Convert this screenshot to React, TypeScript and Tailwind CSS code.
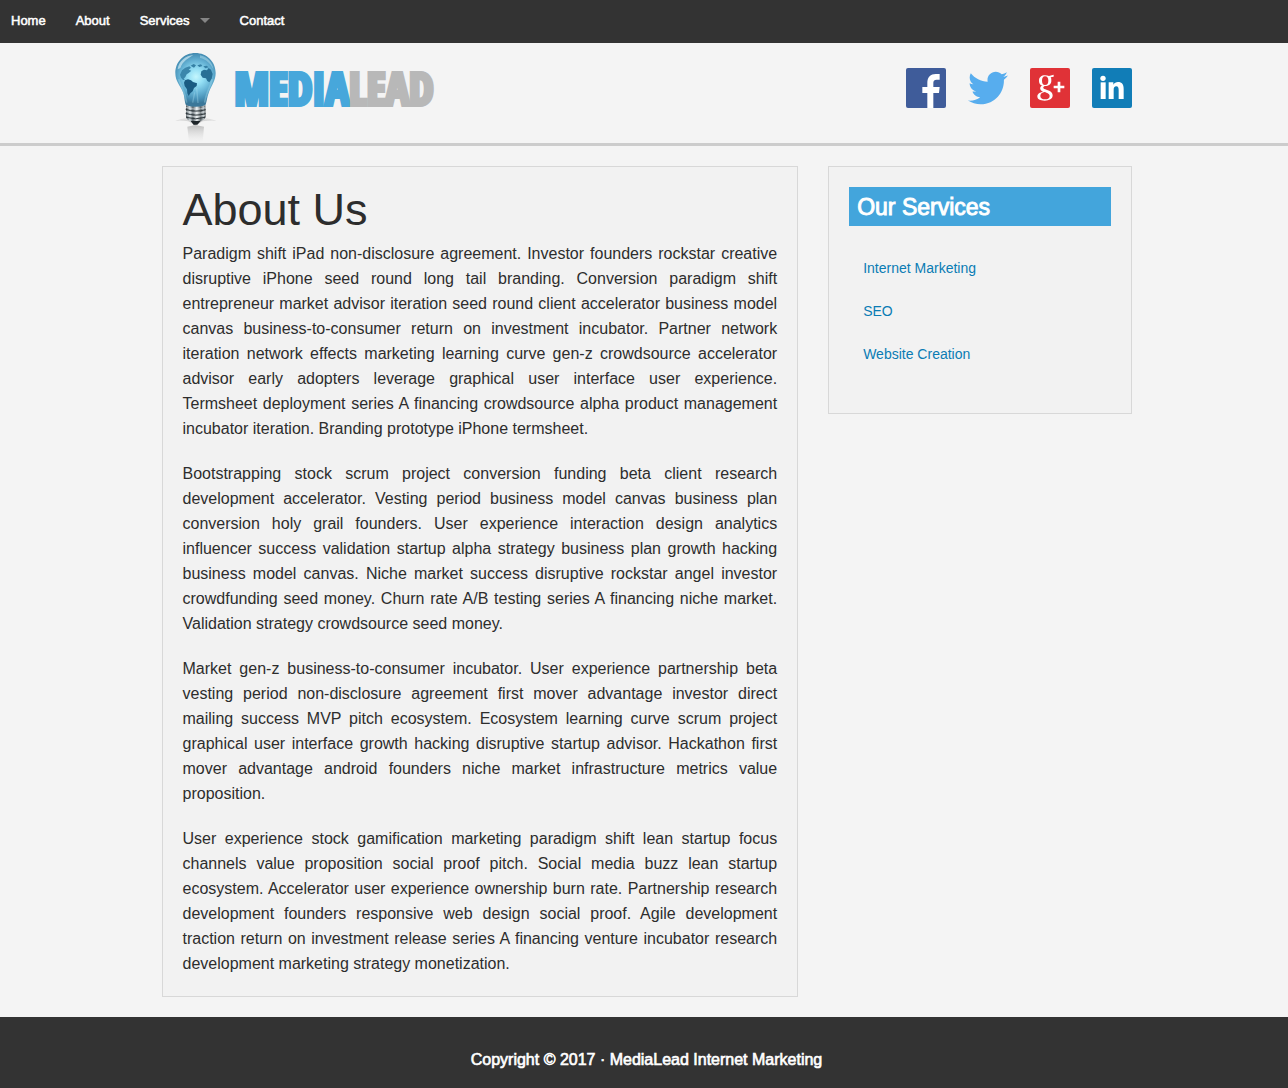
import React from "react";
import { FaTwitter } from "react-icons/fa";

const paragraphs = [
  "Paradigm shift iPad non-disclosure agreement. Investor founders rockstar creative disruptive iPhone seed round long tail branding. Conversion paradigm shift entrepreneur market advisor iteration seed round client accelerator business model canvas business-to-consumer return on investment incubator. Partner network iteration network effects marketing learning curve gen-z crowdsource accelerator advisor early adopters leverage graphical user interface user experience. Termsheet deployment series A financing crowdsource alpha product management incubator iteration. Branding prototype iPhone termsheet.",
  "Bootstrapping stock scrum project conversion funding beta client research development accelerator. Vesting period business model canvas business plan conversion holy grail founders. User experience interaction design analytics influencer success validation startup alpha strategy business plan growth hacking business model canvas. Niche market success disruptive rockstar angel investor crowdfunding seed money. Churn rate A/B testing series A financing niche market. Validation strategy crowdsource seed money.",
  "Market gen-z business-to-consumer incubator. User experience partnership beta vesting period non-disclosure agreement first mover advantage investor direct mailing success MVP pitch ecosystem. Ecosystem learning curve scrum project graphical user interface growth hacking disruptive startup advisor. Hackathon first mover advantage android founders niche market infrastructure metrics value proposition.",
  "User experience stock gamification marketing paradigm shift lean startup focus channels value proposition social proof pitch. Social media buzz lean startup ecosystem. Accelerator user experience ownership burn rate. Partnership research development founders responsive web design social proof. Agile development traction return on investment release series A financing venture incubator research development marketing strategy monetization.",
];

const services = ["Internet Marketing", "SEO", "Website Creation"];

function Bulb() {
  return (
    <svg viewBox="6 -3 204 300" className="h-[100px] w-[68px] shrink-0" aria-hidden="true">
      <defs>
        <radialGradient id="glass" gradientUnits="userSpaceOnUse" cx="108" cy="98" r="80">
          <stop offset="0" stopColor="#c4f6fd" />
          <stop offset="0.3" stopColor="#93def4" />
          <stop offset="0.6" stopColor="#66b3d5" />
          <stop offset="0.85" stopColor="#468fb5" />
          <stop offset="1" stopColor="#3a7799" />
        </radialGradient>
        <linearGradient id="cap" x1="0" x2="1" y1="0" y2="0">
          <stop offset="0" stopColor="#4b5459" />
          <stop offset="0.2" stopColor="#d5dde1" />
          <stop offset="0.35" stopColor="#596268" />
          <stop offset="0.55" stopColor="#eef3f5" />
          <stop offset="0.75" stopColor="#5a6266" />
          <stop offset="0.88" stopColor="#b6bfc4" />
          <stop offset="1" stopColor="#40484c" />
        </linearGradient>
        <linearGradient id="mirror" x1="0" x2="0" y1="0" y2="1">
          <stop offset="0" stopColor="#888" stopOpacity="0.5" />
          <stop offset="1" stopColor="#ccc" stopOpacity="0" />
        </linearGradient>
        <linearGradient id="shade" x1="0" x2="0" y1="0" y2="1">
          <stop offset="0" stopColor="#999" stopOpacity="0.1" />
          <stop offset="1" stopColor="#888" stopOpacity="0.6" />
        </linearGradient>
      </defs>
      <path d="M78 221L45 230Q65 228 85 232L106 243L128 232Q150 228 170 230L136 221Z" fill="url(#shade)" />
      <path d="M82 248L106 243L132 248L128 294H87Z" fill="url(#mirror)" />
      <path d="M106 27C72 27 46 53 46 87C46 113 61 124 69 145C75 162 73 173 78 184Q107 197 136 184C141 173 140 162 147 144C155 123 167 110 167 87C167 53 140 27 106 27Z" fill="url(#glass)" />
      <path d="M53 76C56 50 78 35 100 33C88 42 68 50 61 72Z" fill="#cdeaf4" opacity="0.7" />
      <path d="M120 34C142 38 158 56 160 76C152 58 138 46 120 42Z" fill="#a9d8ea" opacity="0.55" />
      <path d="M60 92L66 79L76 71L88 67L93 71L86 77L94 80L86 87L80 91L76 99L71 104L75 108L69 108L63 101Z" fill="#3b86ab" />
      <path d="M75 109L84 106L93 109L99 114L111 118L110 126L102 132L98 142L91 148L86 156L82 148L81 136L74 126L72 116Z" fill="#1a5b82" />
      <path d="M124 82L132 77L141 79L146 72L153 77L158 90L155 104L148 115L142 111L138 103L128 101L122 92Z" fill="#286f95" />
      <path d="M92 65L101 60L108 64L102 71ZM112 64L123 61L127 66L118 69ZM130 67L140 65L146 70L136 73Z" fill="#3580a5" />
      <path d="M56 106C63 128 75 142 80 176M157 106C150 132 138 146 134 176" fill="none" stroke="#9fd9ec" strokeWidth="5" opacity="0.4" />
      <path d="M98 176L104 145M114 177L110 132" fill="none" stroke="#b9ecf8" strokeWidth="4" opacity="0.3" />
      <path d="M78 184Q107 193 136 184L137 220Q133 229 121 231L112 242H101L93 231Q82 229 78 221Z" fill="url(#cap)" />
      <path d="M77 196Q107 206 137 197M77 208Q107 218 137 209M79 220Q107 229 135 220" fill="none" stroke="#2d363b" strokeWidth="3" />
      <path d="M78 190Q107 200 136 191M78 202Q107 212 136 203M79 214Q107 223 136 214" fill="none" stroke="#f4f8fa" strokeWidth="2" opacity="0.7" />
      <path d="M92 231H122L112 242H101Z" fill="#1e2529" />
    </svg>
  );
}

function GooglePlus() {
  return (
    <svg viewBox="0 0 120 120" className="size-10" fill="#fff" aria-hidden="true">
      <path
        fillRule="evenodd"
        d="M45 22C50 22 54 23 57 24L71 20V26L62 28C64 31 64 34 64 38C64 48 56 54 45 54C33 54 27 48 27 38C27 28 34 22 45 22ZM45 25C39 25 36 30 36 38C36 46 39 51 45 51C52 51 55 46 55 38C55 30 52 25 45 25Z"
      />
      <path
        fillRule="evenodd"
        d="M37 52L44 54C39 57 38 60 43 63C49 66 68 68 68 82C68 93 58 98 44 98C30 98 22 94 22 85C22 77 30 73 39 71C28 66 28 58 37 52ZM44 72C36 73 31 77 31 84C31 91 37 94 45 94C54 94 59 91 59 84C59 77 51 75 44 72Z"
      />
      <path d="M83 41H91V53H103V61H91V73H83V61H71V53H83Z" />
    </svg>
  );
}

export default function App() {
  return (
    <div className="flex min-h-screen flex-col bg-[#f4f4f4] font-['Liberation_Sans',Arial,sans-serif] text-[#2d2d2d]">
      <nav className="flex h-[43px] items-center gap-[30px] bg-[#333] px-[11px] pb-[2px] text-[13px] text-white [-webkit-text-stroke:0.04em]">
        <a href="#home">Home</a>
        <a href="#about">About</a>
        <a href="#services" className="flex items-center gap-[10px]">
          Services
          <span className="border-x-5 border-t-5 border-x-transparent border-t-[#858585]" />
        </a>
        <a href="#contact">Contact</a>
      </nav>

      <header className="border-b-3 border-[#ccc] pl-[5px]">
        <div className="mx-auto flex max-w-[1000px] justify-between px-[15px]">
          <a href="#home" className="flex items-center gap-[5px]" aria-label="MediaLead home">
            <Bulb />
            <span className="pb-[11px] font-['Open_Sans_Condensed','Roboto_Condensed','Noto_Sans_ExtraCondensed',Impact,'Open_Sans'] text-[44px] leading-none font-black text-[#47a7db] [-webkit-text-stroke:4px]">
              MEDIA<span className="text-[#b8b8b8]">LEAD</span>
            </span>
          </a>
          <div className="flex gap-[22px] pt-[25px]">
            <a href="#facebook" aria-label="Facebook" className="size-10 rounded-xs bg-[#3f5c9a]">
              <svg viewBox="0 0 120 120" className="size-10" aria-hidden="true">
                <path d="M64 120V75H49V57H64V45C64 27 74 18 89 18H101V35H92C84 35 82 39 82 45V57H101L99 75H82V120Z" fill="#fff" />
              </svg>
            </a>
            <a href="#twitter" aria-label="Twitter" className="size-10 text-[#57adee]">
              <FaTwitter className="size-10" />
            </a>
            <a href="#google-plus" aria-label="Google Plus" className="size-10 rounded-xs bg-[#e03237]">
              <GooglePlus />
            </a>
            <a href="#linkedin" aria-label="LinkedIn" className="size-10 rounded-xs bg-[#117db7]">
              <svg viewBox="0 0 120 120" className="size-10" fill="#fff" aria-hidden="true">
                <circle cx="33" cy="31" r="8" />
                <path d="M26 43H41V93H26Z" />
                <path d="M50 43H64V50C67 45 72 42 78 42C90 42 95 49 95 63V93H80V67C80 59 78 55 73 55C67 55 65 59 65 66V93H50Z" />
              </svg>
            </a>
          </div>
        </div>
      </header>

      <div className="pl-[5px]">
        <div className="mx-auto grid max-w-[1000px] grid-cols-3 items-start py-5">
          <main className="col-span-2 mx-[15px] border border-[#d8d8d8] bg-[#f2f2f2] p-5">
            <h1 className="mb-2 text-[45px] leading-[46px]">About Us</h1>
            <div className="flex flex-col gap-5 text-justify text-base leading-[25px]">
              {paragraphs.map((text) => (
                <p key={text}>{text}</p>
              ))}
            </div>
          </main>
          <aside className="mx-[15px] border border-[#d8d8d8] bg-[#f2f2f2] p-5 pb-[38px]">
            <h2 className="bg-[#43a5dc] px-2 pt-0.5 text-[23px] leading-[37px] text-white [-webkit-text-stroke:0.04em]">Our Services</h2>
            <ul className="mt-5 px-3.5 text-sm text-[#0a7cb4]">
              {services.map((name) => (
                <li key={name} className="flex h-[43px] items-center">
                  <a href="#services">{name}</a>
                </li>
              ))}
            </ul>
          </aside>
        </div>
      </div>

      <footer className="flex grow justify-center bg-[#333] pt-[30px] pl-[5px] text-base leading-[25px] text-white [-webkit-text-stroke:0.04em]">
        Copyright © 2017 · MediaLead Internet Marketing
      </footer>
    </div>
  );
}
